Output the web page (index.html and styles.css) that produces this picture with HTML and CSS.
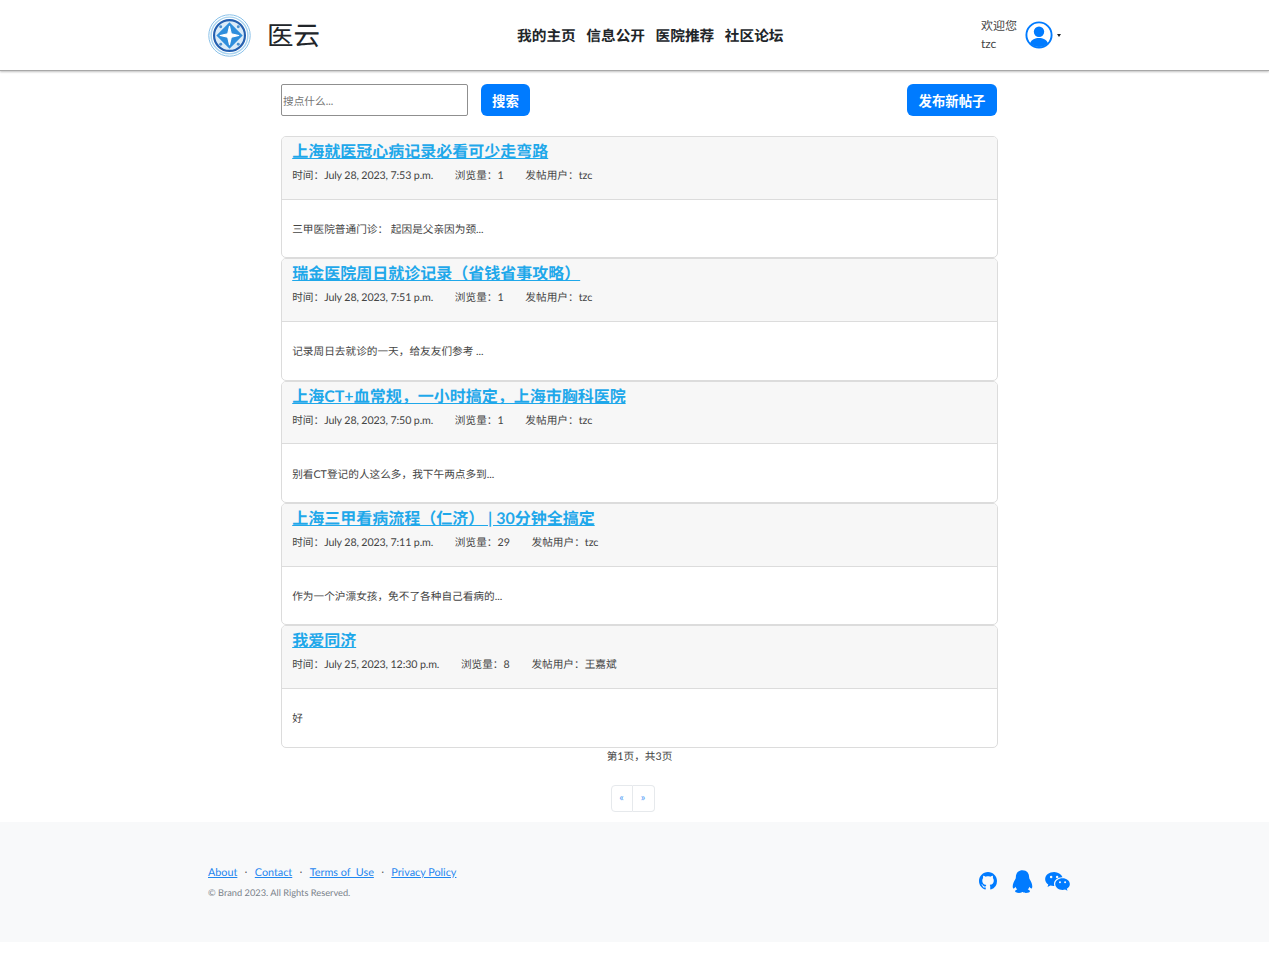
FILE: index.html
```html
<!DOCTYPE html>
<html lang="zh">
<head>
<meta charset="utf-8">
<title>医云</title>
<link rel="stylesheet" href="styles.css">
</head>
<body>
<header class="nav">
  <div class="nav-inner">
    <a class="brand" href="#">
      <svg class="logo" viewBox="0 0 44 44" aria-hidden="true">
        <circle cx="22" cy="22" r="21.200" fill="#fff" stroke="#86c0e8" stroke-width="1"/>
        <circle cx="22" cy="22" r="18.800" fill="none" stroke="#a9d3ef" stroke-width="1.500"/>
        <circle cx="22" cy="22" r="15.800" fill="#dcecf8" stroke="#2560b0" stroke-width="2.200"/>
        <circle cx="13" cy="13" r="1.500" fill="#4a90d0"/><circle cx="31" cy="13" r="1.500" fill="#4a90d0"/>
        <circle cx="13" cy="31" r="1.500" fill="#4a90d0"/><circle cx="31" cy="31" r="1.500" fill="#4a90d0"/>
        <path d="M22 8.500 35.500 22 22 35.500 8.500 22Z" fill="#2f8edc"/>
        <path d="M22 12.500 23.800 20.200 31.500 22 23.800 23.800 22 31.500 20.200 23.800 12.500 22 20.200 20.200Z" fill="#fff" stroke="#fff" stroke-width="1.100" stroke-linejoin="round"/>
      </svg>
      <span class="brand-name">医云</span>
    </a>
    <nav class="menu">
      <a href="#">我的主页</a>
      <a href="#">信息公开</a>
      <a href="#">医院推荐</a>
      <a href="#">社区论坛</a>
    </nav>
    <div class="user">
      <div class="welcome"><span>欢迎您</span><span>tzc</span></div>
      <svg class="avatar" viewBox="0 0 28 28" aria-hidden="true">
        <circle cx="14" cy="14" r="12.600" fill="#fff" stroke="#007bff" stroke-width="1.900"/>
        <circle cx="14" cy="10.800" r="5.200" fill="#007bff"/>
        <path d="M5 22.200c1.500-3.600 5-5.200 9-5.200s7.500 1.600 9 5.200C20.800 24.600 17.600 26 14 26S7.200 24.600 5 22.200Z" fill="#007bff"/>
      </svg>
      <span class="caret"></span>
    </div>
  </div>
</header>

<main class="main">
  <div class="toolbar">
    <form class="search">
      <input class="search-input" type="text" placeholder="搜点什么...">
      <button class="btn" type="button">搜索</button>
    </form>
    <button class="btn btn-post" type="button">发布新帖子</button>
  </div>

  <div class="posts">
    <article class="card">
      <div class="card-head">
        <h2><a href="#">上海就医冠心病记录必看可少走弯路</a></h2>
        <p class="meta"><span>时间：<span class="date">July 28, 2023, 7:53 p.m.</span></span><span>浏览量：1</span><span>发帖用户：tzc</span></p>
      </div>
      <div class="card-body">三甲医院普通门诊： 起因是父亲因为颈...</div>
    </article>
    <article class="card">
      <div class="card-head">
        <h2><a href="#">瑞金医院周日就诊记录（省钱省事攻略）</a></h2>
        <p class="meta"><span>时间：<span class="date">July 28, 2023, 7:51 p.m.</span></span><span>浏览量：1</span><span>发帖用户：tzc</span></p>
      </div>
      <div class="card-body">记录周日去就诊的一天，给友友们参考 ...</div>
    </article>
    <article class="card">
      <div class="card-head">
        <h2><a href="#">上海CT+血常规，一小时搞定，上海市胸科医院</a></h2>
        <p class="meta"><span>时间：<span class="date">July 28, 2023, 7:50 p.m.</span></span><span>浏览量：1</span><span>发帖用户：tzc</span></p>
      </div>
      <div class="card-body">别看CT登记的人这么多，我下午两点多到...</div>
    </article>
    <article class="card">
      <div class="card-head">
        <h2><a href="#">上海三甲看病流程（仁济）&nbsp;| 30分钟全搞定</a></h2>
        <p class="meta"><span>时间：<span class="date">July 28, 2023, 7:11 p.m.</span></span><span>浏览量：29</span><span>发帖用户：tzc</span></p>
      </div>
      <div class="card-body">作为一个沪漂女孩，免不了各种自己看病的...</div>
    </article>
    <article class="card">
      <div class="card-head">
        <h2><a href="#">我爱同济</a></h2>
        <p class="meta"><span>时间：<span class="date">July 25, 2023, 12:30 p.m.</span></span><span>浏览量：8</span><span>发帖用户：王嘉斌</span></p>
      </div>
      <div class="card-body">好</div>
    </article>
  </div>

  <p class="page-info">第1页，共3页</p>
  <div class="pager"><a href="#">«</a><a href="#">»</a></div>
</main>

<footer class="footer">
  <div class="footer-inner">
    <div class="footer-text">
      <ul class="links">
        <li><a href="#">About</a></li>
        <li>⋅</li>
        <li><a href="#">Contact</a></li>
        <li>⋅</li>
        <li><a href="#">Terms of&nbsp;&nbsp;Use</a></li>
        <li>⋅</li>
        <li><a href="#">Privacy Policy</a></li>
      </ul>
      <p class="copy">© Brand 2023. All Rights Reserved.</p>
    </div>
    <div class="social">
      <svg class="ic-gh" viewBox="0 0 16 16" aria-hidden="true"><path d="M8 0C3.58 0 0 3.58 0 8c0 3.540 2.290 6.530 5.470 7.590.4.070.55-.17.55-.38 0-.19-.01-.82-.01-1.490-2.010.37-2.530-.49-2.690-.94-.09-.23-.48-.94-.82-1.130-.28-.15-.68-.52-.01-.53.63-.01 1.080.58 1.230.82.720 1.210 1.870.87 2.330.66.070-.52.28-.87.51-1.070-1.780-.2-3.640-.89-3.640-3.950 0-.87.31-1.590.82-2.150-.08-.2-.36-1.020.08-2.120 0 0 .67-.21 2.200.82.640-.18 1.320-.27 2-.27.68 0 1.360.09 2 .27 1.530-1.040 2.200-.82 2.200-.82.44 1.100.16 1.920.08 2.120.51.56.82 1.270.82 2.150 0 3.070-1.870 3.750-3.650 3.950.29.25.54.73.54 1.480 0 1.070-.01 1.930-.01 2.200 0 .21.15.46.55.38A8.013 8.013 0 0 0 16 8c0-4.420-3.580-8-8-8z"/></svg>
      <svg class="ic-qq" viewBox="0 0 24 26" aria-hidden="true"><path d="M12 0C6.800 0 4.400 3.800 4.400 8c0 1-.3 1.800-.8 2.600C2 13 .8 16 .8 18.600c0 1.500.5 2.300 1.100 2.300.6 0 1.400-.7 2.100-1.800.4 1.200 1.100 2.300 2 3.100-1.500.4-2.500 1.100-2.500 2 0 1.200 2 1.800 4.600 1.800 1.700 0 3-.4 3.700-1h.4c.7.600 2 1 3.700 1 2.600 0 4.600-.6 4.600-1.800 0-.9-1-1.600-2.500-2 .9-.8 1.600-1.900 2-3.100.7 1.100 1.500 1.800 2.100 1.800.6 0 1.100-.8 1.100-2.300 0-2.600-1.200-5.600-2.800-8-.5-.8-.8-1.600-.8-2.600C19.600 3.800 17.200 0 12 0Z"/></svg>
      <svg class="ic-wx" viewBox="0 0 26 20" aria-hidden="true">
        <path d="M9.500 0C4.300 0 0 3.300 0 7.500c0 2.300 1.300 4.300 3.300 5.700l-.8 2.600 3-1.500c1.100.3 2.200.5 3.400.5h.8c-.3-.8-.4-1.500-.4-2.300 0-3.900 3.700-7 8.300-7h.7C16.800 2.200 13.500 0 9.500 0Z"/>
        <path d="M26 12.700c0-3.400-3.500-6.200-7.700-6.200s-7.700 2.800-7.700 6.200 3.500 6.200 7.700 6.200c.9 0 1.800-.1 2.700-.4l2.500 1.300-.7-2.100c2-1.200 3.200-2.900 3.200-5Z"/>
        <circle cx="6.300" cy="5.300" r="1.300" fill="#f8f9fa"/><circle cx="12.600" cy="5.300" r="1.300" fill="#f8f9fa"/>
        <circle cx="15.600" cy="10.800" r="1.050" fill="#f8f9fa"/><circle cx="21" cy="10.800" r="1.050" fill="#f8f9fa"/>
      </svg>
    </div>
  </div>
</footer>
</body>
</html>
```
FILE: styles.css
```css
* { box-sizing: border-box; }
body {
  margin: 0;
  background: #fff;
  color: #212529;
  font-family: Lato, "Noto Sans CJK SC", sans-serif;
  font-size: 10.67px;
  line-height: 1.5;
  text-rendering: geometricPrecision;
}
a { color: inherit; }

.nav {
  height: 71px;
  background: #fff;
  border-bottom: 1px solid #a8a8a8;
  box-shadow: 0 1px 2px rgba(0,0,0,.25);
}
.nav-inner {
  width: 855px;
  margin-left: 208px;
  height: 70px;
  display: flex;
  align-items: center;
}
.brand { display: flex; align-items: center; text-decoration: none; width: 309px; }
.logo { width: 43px; height: 43px; flex: none; }
.brand-name { margin: 1px 0 0 16px; font-size: 26.500px; line-height: 1; color: #212529; }
.menu { display: flex; gap: 10.500px; width: 464px; margin-top: 3px; }
.menu a { font-size: 14.700px; font-weight: 700; color: #212529; text-decoration: none; }
.user { display: flex; align-items: center; }
.welcome { display: flex; flex-direction: column; font-size: 12px; line-height: 18px; color: #444; width: 44px; }
.avatar { width: 28px; height: 28px; flex: none; }
.caret {
  margin-left: 4px;
  border-top: 3px solid #212529;
  border-left: 2.500px solid transparent;
  border-right: 2.500px solid transparent;
}

.main { width: 717px; margin-left: 281px; }
.toolbar { display: flex; justify-content: space-between; padding: 13px 1px 0 0; height: 65px; }
.search { display: flex; gap: 13px; }
.search-input {
  width: 187px;
  height: 32px;
  padding: 0 1px;
  border: 1px solid #8f8f8f;
  border-radius: 2px;
  font: 10.670px Lato, "Noto Sans CJK SC", sans-serif;
  color: #212529;
}
.search-input::placeholder { color: #757575; opacity: 1; }
.btn {
  height: 32px;
  padding: 0 11px;
  border: 0;
  border-radius: 6px;
  background: #007bff;
  color: #fff;
  font: 700 13.400px Lato, "Noto Sans CJK SC", sans-serif;
}
.btn-post { padding: 0 11.500px; }

.card {
  height: 122.350px;
  border: 1px solid #dcdcdc;
  border-radius: 5px;
  overflow: hidden;
  display: flex;
  flex-direction: column;
}
.card-head {
  height: 62.500px;
  padding: 0 10.200px;
  background: #f7f7f7;
  border-bottom: 1px solid #dcdcdc;
}
.card-head h2 { margin: 0; font-size: 16px; line-height: 30px; font-weight: 700; color: #1fa8ea; }
.meta { margin: 0; font-size: 10.670px; line-height: 16px; color: #444; display: flex; gap: 21.700px; padding-top: 1px; }
.date { letter-spacing: -.12px; }
.card-body { flex: 1; padding: 3px 10.200px 0; display: flex; align-items: center; font-size: 10.670px; color: #444; }

.page-info { margin: 0; height: 37px; padding-top: 1px; text-align: center; line-height: 16px; font-size: 10.670px; color: #444; }
.pager { display: flex; justify-content: center; height: 37px; padding-right: 14px; }
.pager a {
  width: 22px;
  height: 27px;
  border: 1px solid #e6e9ec;
  display: flex;
  align-items: center;
  justify-content: center;
  color: #3d94f5;
  font-size: 10.670px;
  text-decoration: none;
}
.pager a:first-child { border-radius: 4px 0 0 4px; }
.pager a + a { border-left: 0; border-radius: 0 4px 4px 0; }

.footer { height: 120px; background: #f8f9fa; }
.footer-inner {
  width: 862px;
  height: 120px;
  margin-left: 208px;
  display: flex;
  justify-content: space-between;
  align-items: center;
}
.footer-text { padding-top: 1px; }
.links { list-style: none; margin: 0; padding: 0; display: flex; gap: 7px; font-size: 10.800px; line-height: 16px; color: #444; }
.links a { color: #1f86f0; }
.copy { margin: 5px 0 0; font-size: 9.250px; line-height: 14px; color: #7a828a; }
.social { display: flex; align-items: center; fill: #007bff; margin-bottom: 1px; }
.ic-gh { width: 18px; height: 18px; margin-right: 15px; }
.ic-qq { width: 21px; height: 23px; margin-right: 12px; }
.ic-wx { width: 25px; height: 19px; }
```
